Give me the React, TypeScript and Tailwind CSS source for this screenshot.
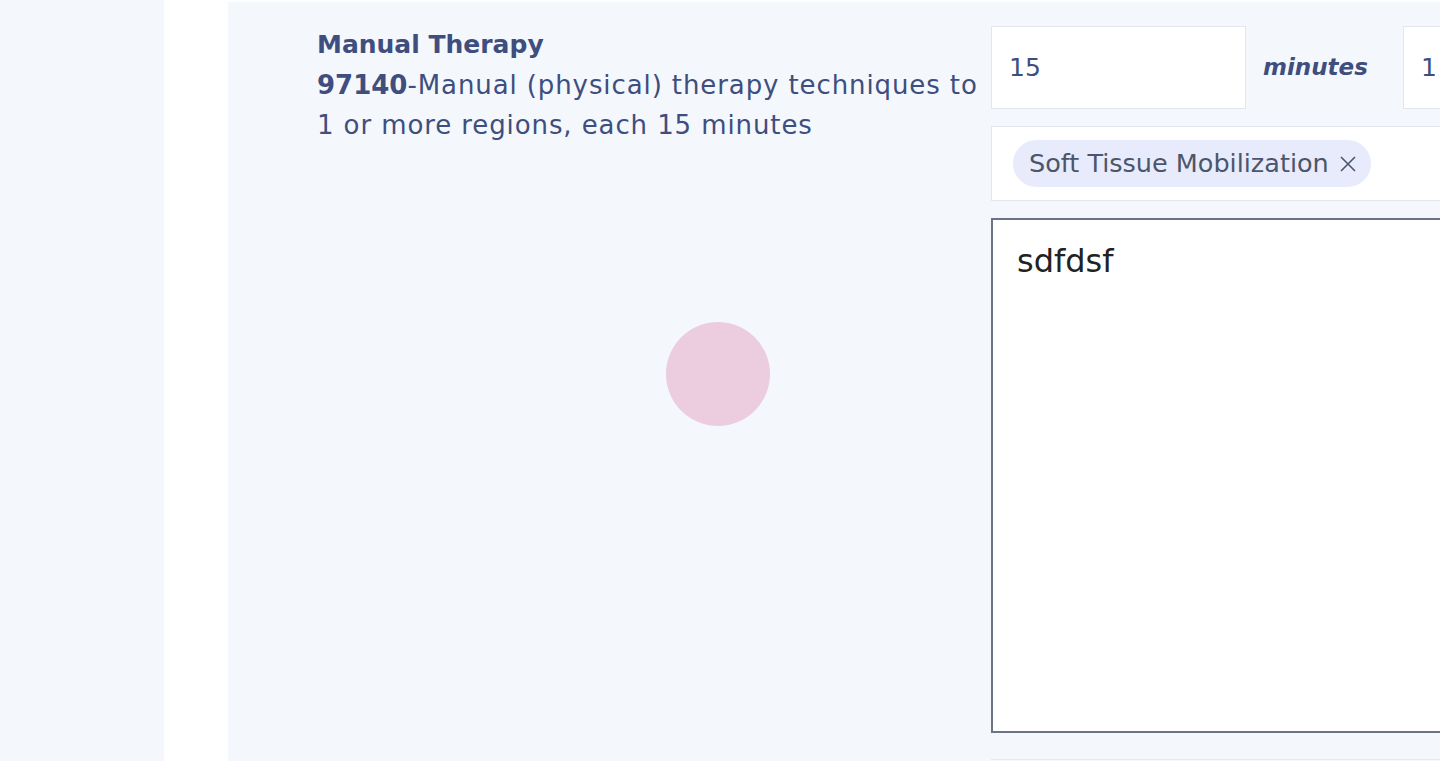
import React from 'react';

export default function App() {
  return (
    <div className="relative flex h-[761px] w-[1440px] overflow-hidden bg-white font-['DejaVu_Sans',sans-serif]">
      <div className="w-[164px] shrink-0 bg-[#f4f7fc]" />
      <div className="w-[64px] shrink-0 bg-white" />
      <main className="mt-[2px] flex flex-1 bg-[#f4f7fc] pl-[89px]">
        <div className="w-[674px] shrink-0 pr-[4px] pt-[23px] text-[26px] leading-[40px] text-[#3e4e7e]">
          <div className="text-[25px] font-semibold">Manual Therapy</div>
          <p className="tracking-[0.9px]">
            <b className="font-semibold tracking-[0px]">97140</b>-Manual (physical) therapy techniques to 1 or more regions, each 15 minutes
          </p>
        </div>
        <div className="flex w-[600px] shrink-0 flex-col pt-[24px]">
          <div className="flex items-center">
            <div className="flex h-[83px] w-[255px] shrink-0 items-center border border-[#e3e6ec] bg-white pl-[17px] text-[25px] text-[#3e4e7e]">
              15
            </div>
            <span className="ml-[17px] w-[106px] text-[23px] font-semibold italic text-[#3e4e7e]">minutes</span>
            <div className="ml-[34px] flex h-[83px] flex-1 items-center border border-[#e3e6ec] bg-white pl-[17px] text-[25px] text-[#3e4e7e]">
              1
            </div>
          </div>
          <div className="mt-[17px] flex h-[75px] items-center border border-[#e3e6ec] bg-white pl-[21px]">
            <span className="flex h-[47px] items-center gap-[10px] rounded-full bg-[#e8ebfb] pl-[16px] pr-[14px] text-[25.5px] text-[#4b566b]">
              Soft Tissue Mobilization
              <svg width="18" height="18" viewBox="0 0 18 18" fill="none" stroke="#4b566b" strokeWidth="1.6">
                <path d="M2 2L16 16M16 2L2 16" />
              </svg>
            </span>
          </div>
          <div className="mt-[17px] h-[515px] border-2 border-[#6b7384] bg-white px-[24px] pt-[17px] text-[32px] leading-[48px] text-[#222222]">
            sdfdsf
          </div>
          <div className="mt-[26px] border-t border-[#e6e9f0]" />
        </div>
      </main>
      <div className="absolute left-[666px] top-[322px] h-[104px] w-[104px] rounded-full bg-[#eccde0]" />
    </div>
  );
}
